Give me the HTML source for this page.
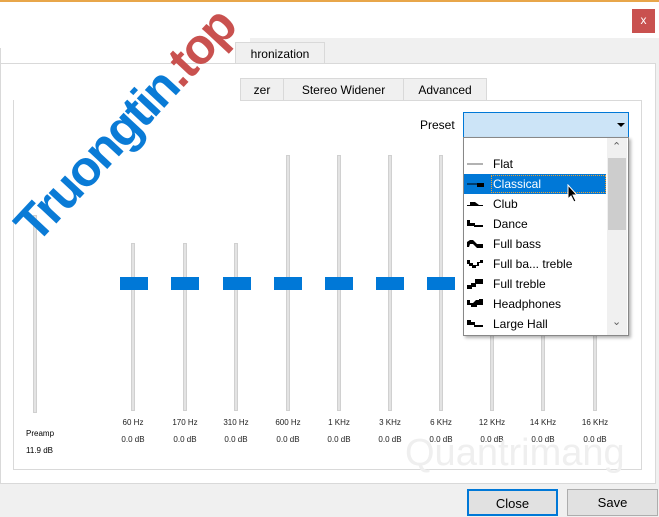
<!DOCTYPE html>
<html><head><meta charset="utf-8"><style>
*{margin:0;padding:0;box-sizing:border-box}
body{width:659px;height:517px;position:relative;overflow:hidden;background:#fff;font-family:"Liberation Sans",sans-serif;font-size:12px;color:#000}
.abs{position:absolute}
.tab{position:absolute;background:#f0f0f0;border:1px solid #d9d9d9;border-bottom:none;text-align:center;line-height:22px;font-size:12px}
.track{position:absolute;width:4px;background:#e3e3e3;border:1px solid #d0d0d0}
.thumb{position:absolute;width:28px;height:13px;background:#0078d7}
.lbl{position:absolute;font-size:8px;color:#222;width:50px;text-align:center}
.item{position:absolute;left:464px;width:142px;height:20px;line-height:20px;font-size:12px}
.item span{position:absolute;left:29px}
.item svg{position:absolute;left:3px;top:5px}
.btn{position:absolute;height:27px;background:#e1e1e1;border:1px solid #adadad;text-align:center;line-height:25px;font-size:13px}
</style></head><body>
<div class="abs" style="left:0;top:0;width:659px;height:2px;background:#e8a64a"></div>
<div class="abs" style="left:632px;top:9px;width:23px;height:24px;background:#c9514f;color:#fff;text-align:center;line-height:23px;font-size:12px">x</div>
<div class="abs" style="left:250px;top:38px;width:409px;height:445px;background:#f0f0f0"></div>
<div class="abs" style="left:0;top:483px;width:659px;height:34px;background:#f0f0f0"></div>
<div class="tab" style="left:235px;top:42px;width:90px;height:22px;background:#f0f0f0">hronization</div>
<div class="abs" style="left:0;top:63px;width:656px;height:421px;background:#fff;border:1px solid #d9d9d9;border-left:none"></div>
<div class="abs" style="left:0;top:48px;width:1px;height:435px;background:#d9d9d9"></div>
<div class="tab" style="left:240px;top:78px;width:44px;height:23px">zer</div>
<div class="tab" style="left:283px;top:78px;width:121px;height:23px">Stereo Widener</div>
<div class="tab" style="left:403px;top:78px;width:84px;height:23px">Advanced</div>
<div class="abs" style="left:13px;top:100px;width:629px;height:370px;border:1px solid #d9d9d9;border-top:none"></div>
<div class="abs" style="left:240px;top:100px;width:402px;height:1px;background:#d9d9d9"></div>
<div class="abs" style="left:420px;top:118px;font-size:12px">Preset</div>
<div class="abs" style="left:463px;top:112px;width:166px;height:26px;background:#cce4f7;border:1px solid #0078d7"></div>
<div class="abs" style="left:617px;top:123px;width:0;height:0;border-left:4px solid transparent;border-right:4px solid transparent;border-top:4px solid #000"></div>
<div class="track" style="left:33px;top:215px;height:198px"></div>
<div class="track" style="left:131px;top:243px;height:168px"></div>
<div class="track" style="left:183px;top:243px;height:168px"></div>
<div class="track" style="left:234px;top:243px;height:168px"></div>
<div class="track" style="left:286px;top:155px;height:256px"></div>
<div class="track" style="left:337px;top:155px;height:256px"></div>
<div class="track" style="left:388px;top:155px;height:256px"></div>
<div class="track" style="left:439px;top:155px;height:256px"></div>
<div class="track" style="left:490px;top:330px;height:81px"></div>
<div class="track" style="left:541px;top:330px;height:81px"></div>
<div class="track" style="left:593px;top:330px;height:81px"></div>
<div class="thumb" style="left:120px;top:277px"></div>
<div class="thumb" style="left:171px;top:277px"></div>
<div class="thumb" style="left:223px;top:277px"></div>
<div class="thumb" style="left:274px;top:277px"></div>
<div class="thumb" style="left:325px;top:277px"></div>
<div class="thumb" style="left:376px;top:277px"></div>
<div class="thumb" style="left:427px;top:277px"></div>
<div class="lbl" style="left:108px;top:418px">60 Hz</div><div class="lbl" style="left:108px;top:435px">0.0 dB</div>
<div class="lbl" style="left:160px;top:418px">170 Hz</div><div class="lbl" style="left:160px;top:435px">0.0 dB</div>
<div class="lbl" style="left:211px;top:418px">310 Hz</div><div class="lbl" style="left:211px;top:435px">0.0 dB</div>
<div class="lbl" style="left:263px;top:418px">600 Hz</div><div class="lbl" style="left:263px;top:435px">0.0 dB</div>
<div class="lbl" style="left:314px;top:418px">1 KHz</div><div class="lbl" style="left:314px;top:435px">0.0 dB</div>
<div class="lbl" style="left:365px;top:418px">3 KHz</div><div class="lbl" style="left:365px;top:435px">0.0 dB</div>
<div class="lbl" style="left:416px;top:418px">6 KHz</div><div class="lbl" style="left:416px;top:435px">0.0 dB</div>
<div class="lbl" style="left:467px;top:418px">12 KHz</div><div class="lbl" style="left:467px;top:435px">0.0 dB</div>
<div class="lbl" style="left:518px;top:418px">14 KHz</div><div class="lbl" style="left:518px;top:435px">0.0 dB</div>
<div class="lbl" style="left:570px;top:418px">16 KHz</div><div class="lbl" style="left:570px;top:435px">0.0 dB</div>
<div class="abs" style="left:26px;top:429px;font-size:8px">Preamp</div>
<div class="abs" style="left:26px;top:446px;font-size:8px">11.9 dB</div>
<div class="abs" style="left:405px;top:432px;width:225px;height:50px;overflow:hidden;font-size:38px;color:#efefef;white-space:nowrap">Quantrimang</div>
<div class="abs" style="left:463px;top:137px;width:166px;height:199px;background:#fff;border:1px solid #888;box-shadow:2px 2px 3px rgba(0,0,0,.3)"></div>
<div class="abs" style="left:607px;top:138px;width:20px;height:197px;background:#f0f0f0"></div>
<div class="abs" style="left:608px;top:158px;width:18px;height:72px;background:#cdcdcd"></div>
<div class="abs" style="left:612px;top:140px;font-size:11px;color:#606060">&#8963;</div>
<div class="abs" style="left:612px;top:315px;font-size:11px;color:#606060">&#8964;</div>
<div class="item" style="top:154px"><svg width="18" height="10"><line x1="0" y1="5" x2="16" y2="5" stroke="#666"/></svg><span>Flat</span></div>
<div class="item" style="top:174px;background:#0078d7;color:#fff"><svg width="18" height="10"><line x1="0" y1="5" x2="10" y2="5" stroke="#000"/><rect x="10" y="4" width="7" height="4" fill="#000"/></svg><span>Classical</span></div>
<div class="item" style="top:194px"><svg width="18" height="10"><path d="M0 6H3V3H8L12 6H16V7H0Z" fill="#000"/></svg><span>Club</span></div>
<div class="item" style="top:214px"><svg width="18" height="10"><path d="M0 1H3V4H8V6H16V8H7V7H0Z" fill="#000"/></svg><span>Dance</span></div>
<div class="item" style="top:234px"><svg width="18" height="10"><path d="M0 3L3 1H6L10 5H16V9H10L6 5H3L2 8H0Z" fill="#000"/></svg><span>Full bass</span></div>
<div class="item" style="top:254px"><svg width="18" height="10"><path d="M0 1H3V4H6V6H10V3H13V1H16V4H12V7H9V9H5V7H2V5H0Z" fill="#000"/></svg><span>Full ba... treble</span></div>
<div class="item" style="top:274px"><svg width="18" height="10"><path d="M0 6H4V4H8V0H16V5H9V8H5V10H0Z" fill="#000"/></svg><span>Full treble</span></div>
<div class="item" style="top:294px"><svg width="18" height="10"><path d="M0 1H3V4H6L9 1H12V0H16V6H10V8H4V6H0Z" fill="#000"/></svg><span>Headphones</span></div>
<div class="item" style="top:314px"><svg width="18" height="10"><path d="M0 1H4V3H8V6H16V8H7V6H0Z" fill="#000"/></svg><span>Large Hall</span></div>
<div class="abs" style="left:491px;top:175px;width:115px;height:18px;border:1px dotted #f0a030"></div>
<svg class="abs" style="left:567px;top:184px" width="12" height="20"><path d="M1 1V15L4 12L7 18L9 17L6 11H10Z" fill="#000" stroke="#fff"/></svg>
<div class="btn" style="left:467px;top:489px;width:91px;border:2px solid #0078d7">Close</div>
<div class="btn" style="left:567px;top:489px;width:91px">Save</div>
<div class="abs" style="left:-40px;top:98px;width:330px;height:54px;line-height:54px;text-align:center;transform:rotate(-47deg);font-size:50px;font-weight:bold;color:#0a7bd6;white-space:nowrap;letter-spacing:-2px">Truongtin<span style="color:#c9514f">.top</span></div>
</body></html>
